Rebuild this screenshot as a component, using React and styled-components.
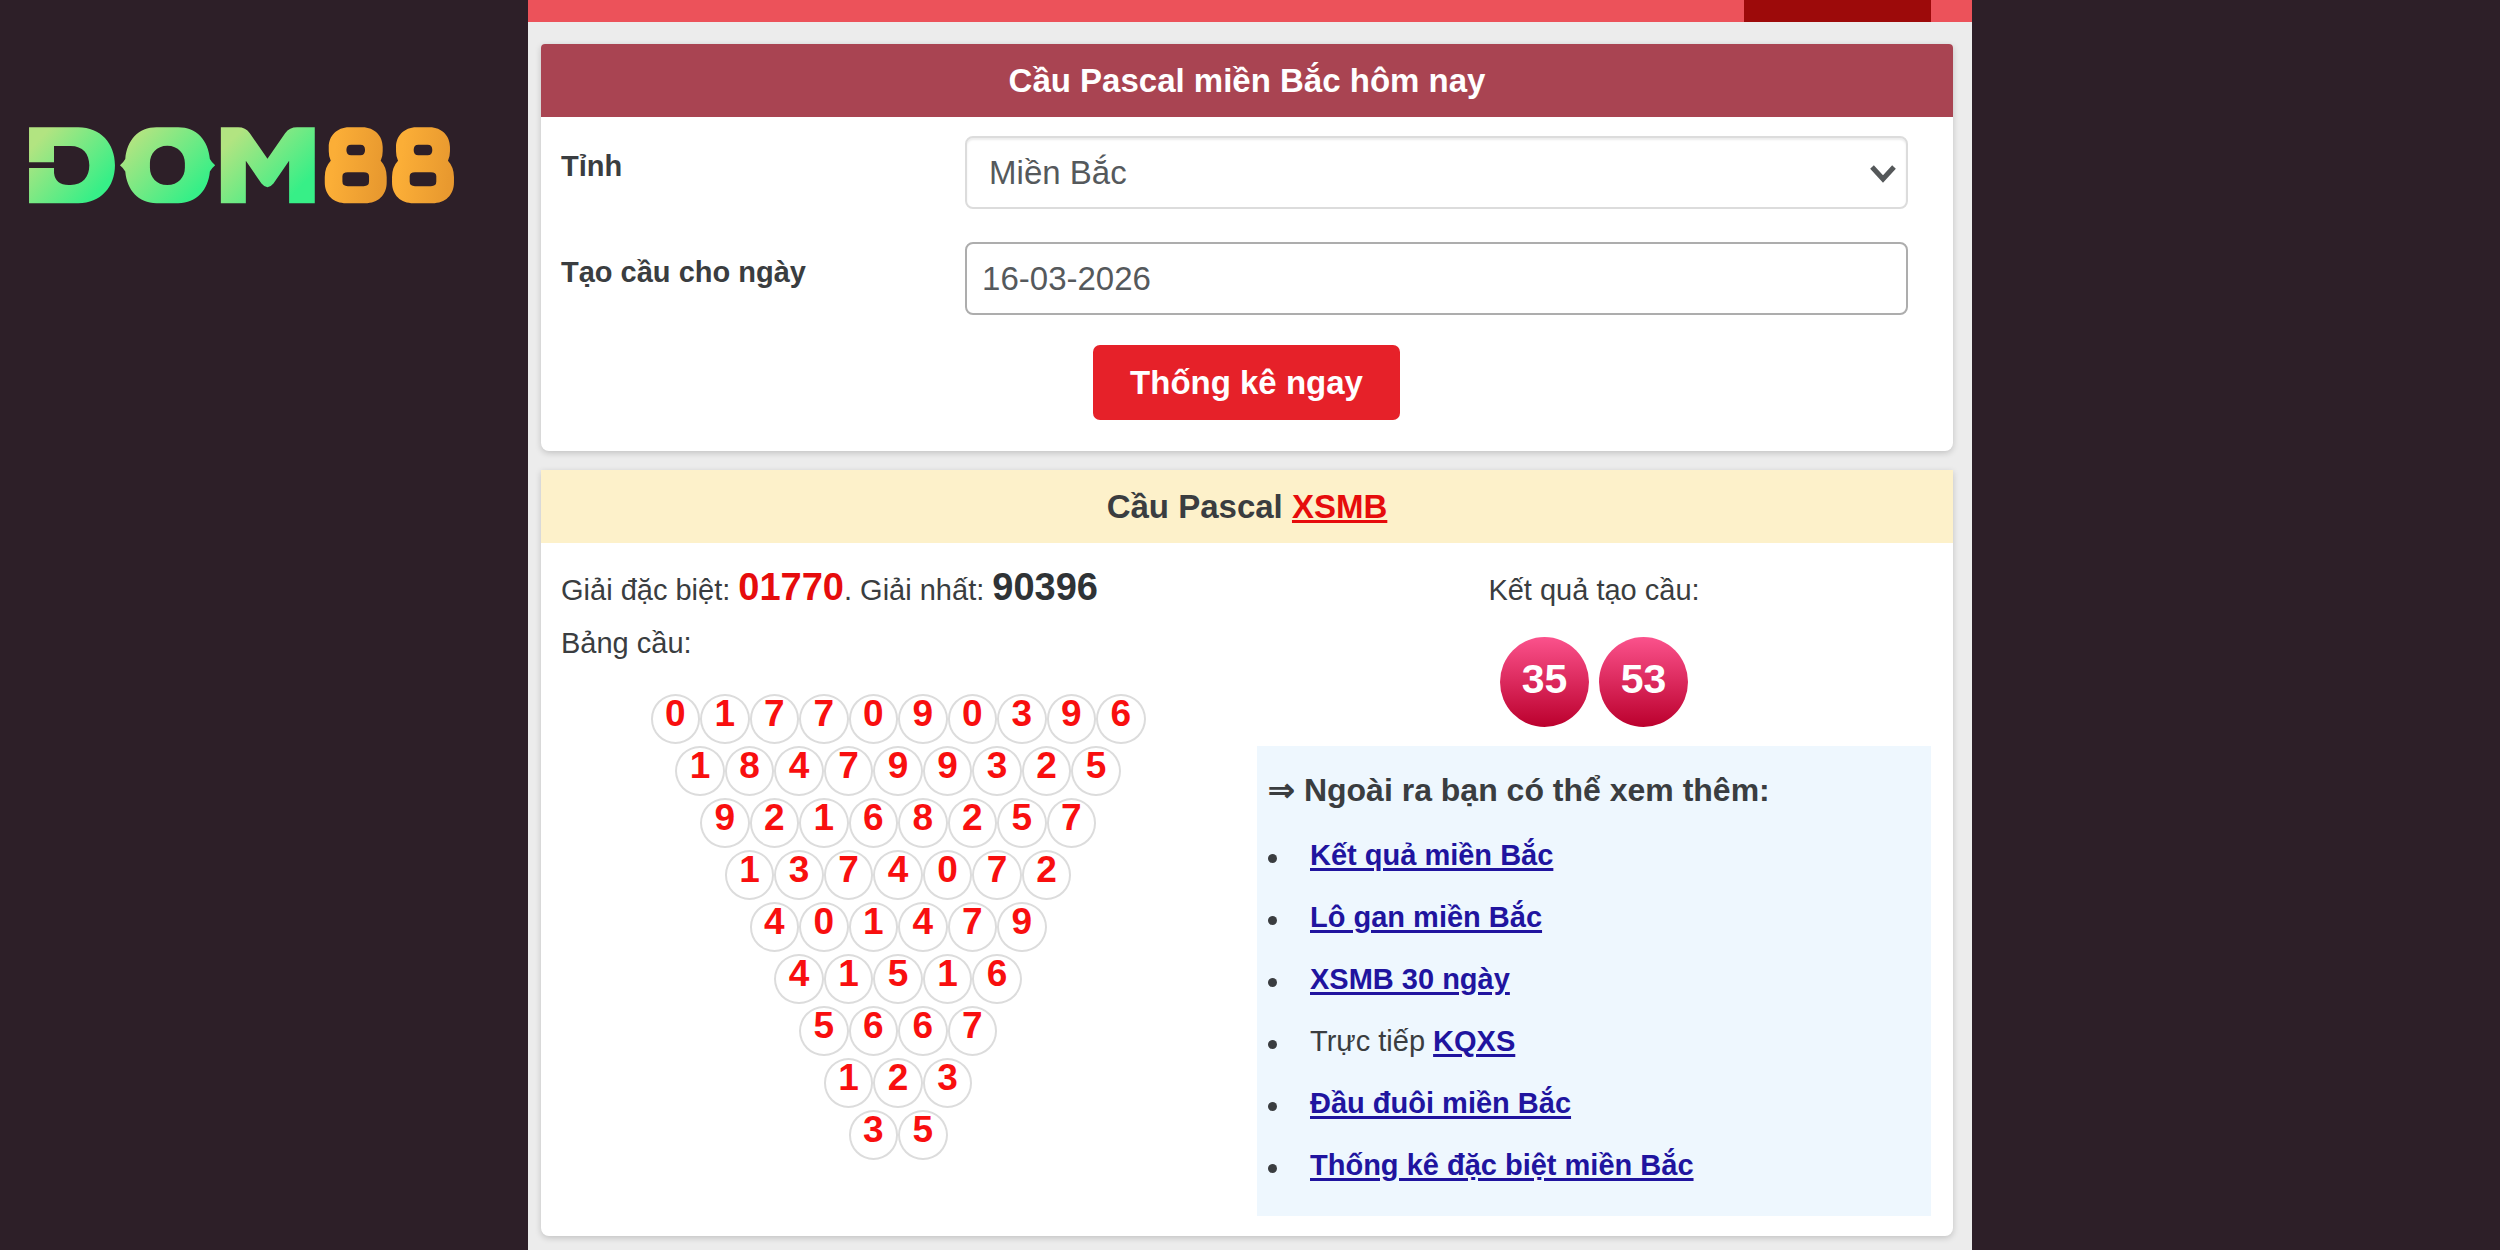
import React, { useState } from 'react'
import styled, { createGlobalStyle } from 'styled-components'

const GlobalStyle = createGlobalStyle`
* {
  box-sizing: border-box;
}
body {
  margin: 0;
  background: #2d1f28;
  color: #3a3d40;
  font-family: "Liberation Sans", Arial, sans-serif;
  font-size: 29px;
}
`

const Page = styled.div`
display: grid;
grid-template-columns: 528px minmax(0, 1fr) 528px;
min-height: 100vh;
`

const Side = styled.aside`
padding: 127px 29px;
`

const LogoLink = styled.a`
display: block;
width: 425px;
svg {
  display: block;
  width: 100%;
}
`

const Main = styled.main`
background: #ececec;
`

const TopBar = styled.header`
display: flex;
justify-content: flex-end;
height: 22px;
padding-right: 41px;
background: #ec525a;
`

const ActiveTab = styled.div`
width: 187px;
background: #9d0a0a;
`

const Cards = styled.div`
display: flex;
flex-direction: column;
gap: 19px;
padding: 22px 19px 14px 13px;
`

const Card = styled.section`
overflow: hidden;
border-radius: ${props => props.$squareTop ? '0 0 8px 8px' : '4px 4px 8px 8px'};
background: #fff;
box-shadow: 0 2px 6px rgba(0,0,0,0.18);
`

const CardTitle = styled.h2`
margin: 0;
font-size: 33px;
line-height: 73px;
font-weight: bold;
text-align: center;
color: ${props => props.$light ? '#3a3d40' : '#fff'};
background: ${props => props.$light ? '#fdf1ca' : '#a94452'};
a {
  color: #e60c0c;
}
`

const Form = styled.form`
display: flex;
flex-direction: column;
padding: 19px 45px 31px 20px;
`

const Field = styled.div`
display: grid;
grid-template-columns: 3fr 7fr;
align-items: start;
margin-bottom: 33px;
`

const Label = styled.label`
font-weight: bold;
line-height: 60px;
`

const SelectBox = styled.div`
position: relative;
svg {
  position: absolute;
  top: 28px;
  right: 11px;
  pointer-events: none;
}
`

const Select = styled.select`
appearance: none;
display: block;
width: 100%;
height: 73px;
padding: 0 50px 0 22px;
border: 2px solid #dcdcdc;
border-radius: 8px;
background: #fff;
box-shadow: inset 0 2px 2px rgba(0,0,0,0.08);
color: #55595c;
font-family: inherit;
font-size: 33px;
`

const DateInput = styled.input`
display: block;
width: 100%;
height: 73px;
padding: 0 15px;
border: 2px solid #adadad;
border-radius: 8px;
background: #fff;
color: #55595c;
font-family: inherit;
font-size: 33px;
`

const SubmitRow = styled.div`
display: flex;
justify-content: center;
margin-top: -3px;
padding-left: 24px;
`

const SubmitButton = styled.button`
height: 75px;
padding: 0 37px;
border: none;
border-radius: 7px;
background: #e62129;
color: #fff;
font-family: inherit;
font-size: 33px;
font-weight: bold;
cursor: pointer;
`

const Columns = styled.div`
display: grid;
grid-template-columns: 1fr 1fr;
gap: 22px;
padding: 21px 22px 20px 20px;
`

const Line = styled.p`
margin: 0;
line-height: 53px;
text-align: ${props => props.$center ? 'center' : 'left'};
`

const Prize = styled.strong`
font-size: 38px;
line-height: 1;
color: ${props => props.$special ? '#e60c0c' : '#2f3336'};
`

const Triangle = styled.div`
display: flex;
flex-direction: column;
gap: 2px;
width: 495px;
margin: 24px auto 0;
`

const TriangleRow = styled.div`
display: flex;
justify-content: center;
`

const Digit = styled.span`
width: 10%;
height: 50px;
border: 2px solid #dcdcdc;
border-radius: 50%;
color: #f80f0f;
font-size: 37px;
font-weight: bold;
line-height: 36px;
text-align: center;
`

const Balls = styled.div`
display: flex;
justify-content: center;
gap: 10px;
margin: 20px 0 19px;
`

const Ball = styled.strong`
width: 89px;
height: 90px;
border-radius: 50%;
background: linear-gradient(#fb528c, #bb002d);
color: #fff;
font-size: 41px;
line-height: 84px;
text-align: center;
`

const MorePanel = styled.div`
padding: 14px 11px 20px;
background: #eef7fe;
`

const MoreTitle = styled.h3`
margin: 0 0 4px;
font-size: 32px;
line-height: 60px;
`

const MoreList = styled.ul`
margin: 0;
padding: 0;
list-style: none;
`

const MoreItem = styled.li`
display: flex;
align-items: center;
line-height: 62px;
white-space: pre;
&::before {
  content: '';
  width: 9px;
  height: 9px;
  margin: 7px 33px 0 0;
  border-radius: 50%;
  background: #3a3d40;
}
a {
  color: #20149f;
  font-weight: bold;
  text-decoration-thickness: 3px;
  text-underline-offset: 3px;
}
`

const rows = [
  '0177090396',
  '184799325',
  '92168257',
  '1374072',
  '401479',
  '41516',
  '5667',
  '123',
  '35'
]

const links = [
  { text: 'Kết quả miền Bắc' },
  { text: 'Lô gan miền Bắc' },
  { text: 'XSMB 30 ngày' },
  { before: 'Trực tiếp ', text: 'KQXS' },
  { text: 'Đầu đuôi miền Bắc' },
  { text: 'Thống kê đặc biệt miền Bắc' }
]

const eight = 'M1048 111H1088C1125 111 1149 138 1149 170V183Q1149 200 1143 211Q1161 230 1161 260V276C1161 315 1135 339 1096 339H1040C1001 339 975 315 975 276V260Q975 230 993 211Q987 200 987 183V170C987 138 1011 111 1048 111ZM1054 163Q1040 163 1040 179Q1040 195 1054 195H1082Q1096 195 1096 179Q1096 163 1082 163ZM1044 246Q1028 246 1028 258V274Q1028 288 1044 288H1092Q1108 288 1108 274V258Q1108 246 1092 246Z'

const Logo = () => (
  <svg viewBox="87 110 1276 230" role="img" aria-label="DOM88" fillRule="evenodd">
    <defs>
      <linearGradient id="green" x1="0" y1="0.1" x2="1" y2="0.9">
        <stop offset="0.1" stopColor="#b2e481" />
        <stop offset="0.85" stopColor="#37ef87" />
      </linearGradient>
      <linearGradient id="orange" y2="0.15">
        <stop offset="0.2" stopColor="#fbae37" />
        <stop offset="1" stopColor="#e8992f" />
      </linearGradient>
    </defs>
    <g fill="url(#green)">
      <path d="M87 111H235C302 111 345 160 345 225C345 290 302 339 235 339H87V233H162V248Q166 284 206 284H212C248 284 268 260 268 225C268 190 248 167 212 167H162V216H87Z" />
      <path d="M470 111H535C590 111 625 150 630 206Q636 217 646 225Q636 233 630 244C625 300 590 339 535 339H470C415 339 381 300 376 244Q370 233 360 225Q370 217 376 206C381 150 415 111 470 111ZM502 166C470 166 450 190 450 218V232C450 260 470 284 502 284C535 284 555 260 555 232V218C555 190 535 166 502 166Z" />
      <path d="M663 111H715Q737 111 750 129L803 205L856 129Q869 111 892 111H945V339H868V211L821 280Q803 302 785 280L738 211V339H663Z" />
    </g>
    <g fill="url(#orange)">
      <path d={eight} />
      <path d={eight} transform="translate(202 0)" />
    </g>
  </svg>
)

const App = () => {
  const [region, setRegion] = useState('mb')
  const [date, setDate] = useState('16-03-2026')

  return (
    <Page>
      <GlobalStyle />
      <Side>
        <LogoLink href="#"><Logo /></LogoLink>
      </Side>
      <Main>
        <TopBar><ActiveTab /></TopBar>
        <Cards>
          <Card>
            <CardTitle>Cầu Pascal miền Bắc hôm nay</CardTitle>
            <Form onSubmit={(event) => event.preventDefault()}>
              <Field>
                <Label htmlFor="region">Tỉnh</Label>
                <SelectBox>
                  <Select id="region" value={region} onChange={(event) => setRegion(event.target.value)}>
                    <option value="mb">Miền Bắc</option>
                  </Select>
                  <svg width="28" height="20" viewBox="0 0 28 20" fill="none" stroke="#55585a" strokeWidth="5">
                    <path d="M3 3L14 15L25 3" />
                  </svg>
                </SelectBox>
              </Field>
              <Field>
                <Label htmlFor="date">Tạo cầu cho ngày</Label>
                <DateInput id="date" type="text" value={date} onChange={(event) => setDate(event.target.value)} />
              </Field>
              <SubmitRow>
                <SubmitButton type="submit">Thống kê ngay</SubmitButton>
              </SubmitRow>
            </Form>
          </Card>

          <Card $squareTop>
            <CardTitle $light>Cầu Pascal <a href="#xsmb">XSMB</a></CardTitle>
            <Columns>
              <div>
                <Line>
                  Giải đặc biệt: <Prize $special>01770</Prize>. Giải nhất: <Prize>90396</Prize>
                </Line>
                <Line>Bảng cầu:</Line>
                <Triangle>
                  {rows.map(row => (
                    <TriangleRow key={row}>
                      {row.split('').map((digit, i) => <Digit key={i}>{digit}</Digit>)}
                    </TriangleRow>
                  ))}
                </Triangle>
              </div>
              <div>
                <Line $center>Kết quả tạo cầu:</Line>
                <Balls>
                  <Ball>35</Ball>
                  <Ball>53</Ball>
                </Balls>
                <MorePanel>
                  <MoreTitle>⇒ Ngoài ra bạn có thể xem thêm:</MoreTitle>
                  <MoreList>
                    {links.map(link => (
                      <MoreItem key={link.text}>{link.before}<a href="#more">{link.text}</a></MoreItem>
                    ))}
                  </MoreList>
                </MorePanel>
              </div>
            </Columns>
          </Card>
        </Cards>
      </Main>
      <Side />
    </Page>
  )
}

export default App
